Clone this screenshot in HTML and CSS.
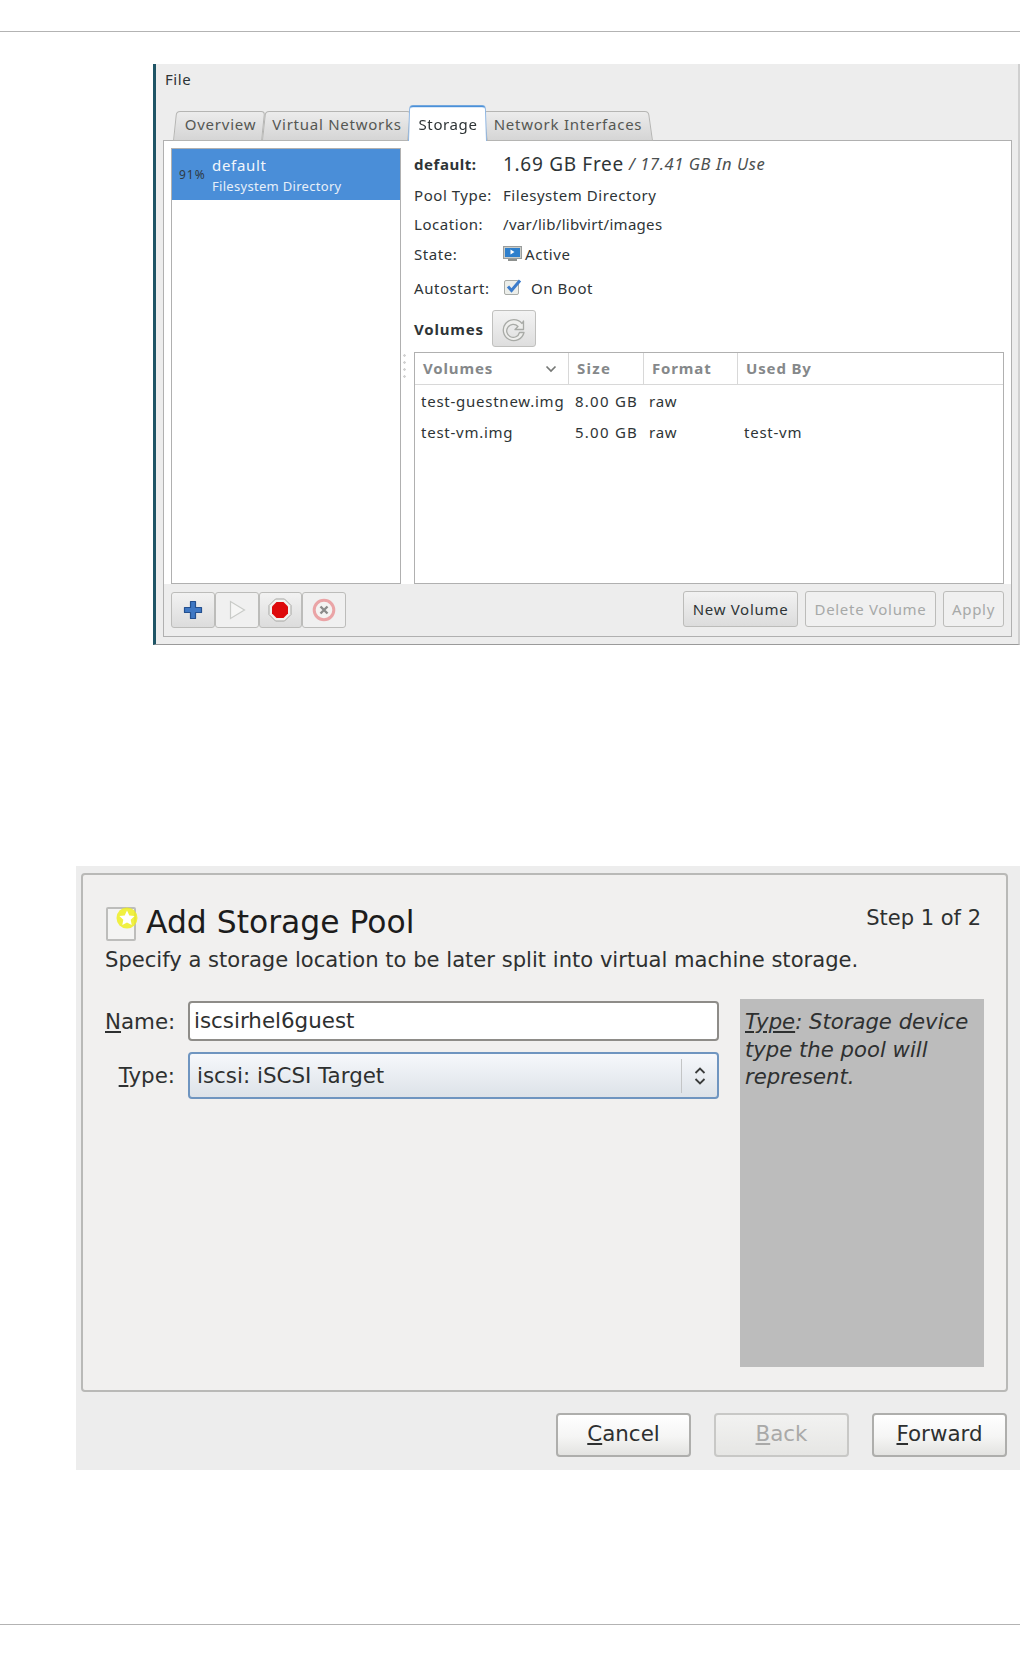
FILE: index.html
```html
<!DOCTYPE html>
<html lang="en">
<head>
    <meta charset="UTF-8">
    <title>Storage Pools</title>
    <link rel="stylesheet" href="styles.css">
</head>
<body>
    <hr class="page-rule page-rule-top">

    <!-- Connection details window -->
    <div class="details-window">
        <div class="menu-bar">File</div>
        <div class="tabs">
            <div class="tab tab-overview">Overview</div>
            <div class="tab tab-networks">Virtual Networks</div>
            <div class="tab tab-storage">Storage</div>
            <div class="tab tab-interfaces">Network Interfaces</div>
        </div>
        <div class="notebook">
            <div class="pool-column">
                <div class="pool-list">
                    <div class="pool-row">
                        <span class="pool-usage">91%</span>
                        <div class="pool-names">
                            <div class="pool-name">default</div>
                            <div class="pool-type">Filesystem Directory</div>
                        </div>
                    </div>
                </div>
                <div class="pool-tools">
                    <div class="tool-btn">
                        <svg width="20" height="20" viewBox="0 0 20 20"><path d="M7.500 1.500h5v6h6v5h-6v6h-5v-6h-6v-5h6z" fill="#3f78c4" stroke="#24508f" stroke-width="1.200" stroke-linejoin="round"/></svg>
                    </div>
                    <div class="tool-btn tool-btn-off">
                        <svg width="20" height="20" viewBox="0 0 20 20"><path d="M3.500 1.500v17l14-8.500z" fill="#f6f6f5" stroke="#c9cbc8" stroke-width="1.200"/></svg>
                    </div>
                    <div class="tool-btn">
                        <svg width="24" height="24" viewBox="0 0 24 24"><path d="M7.500 1h9l6.500 6.500v9l-6.500 6.500h-9l-6.500-6.500v-9z" fill="#f3f3f1" stroke="#a5a5a2"/><path d="M8.500 4h7l4.500 4.500v7l-4.500 4.500h-7l-4.500-4.500v-7z" fill="#dd0a0c"/></svg>
                    </div>
                    <div class="tool-btn tool-btn-off">
                        <svg width="24" height="24" viewBox="0 0 24 24"><circle cx="12" cy="12" r="9.800" fill="#f4f3f2" stroke="#eaa4a6" stroke-width="3"/><path d="M8.500 8.500l7 7m0-7l-7 7" stroke="#8b8b8a" stroke-width="2.400"/></svg>
                    </div>
                </div>
            </div>
            <div class="sash"></div>
            <div class="pool-detail">
                <div class="info-row info-head">
                    <span class="info-label info-label-bold">default:</span>
                    <span class="free-space">1.69 GB Free</span>
                    <em class="in-use">/ 17.41 GB In Use</em>
                </div>
                <div class="info-row"><span class="info-label">Pool Type:</span><span>Filesystem Directory</span></div>
                <div class="info-row"><span class="info-label">Location:</span><span class="location">/var/lib/libvirt/images</span></div>
                <div class="info-row">
                    <span class="info-label">State:</span>
                    <svg class="state-icon" width="19" height="16" viewBox="0 0 19 16"><rect x="0.500" y="0.500" width="18" height="12" fill="#c9ccc9" stroke="#9a9d9c"/><rect x="2" y="2" width="15" height="9" fill="#2e7fcc"/><path d="M7.500 3.500v5l4-2.500z" fill="#fff"/><rect x="5" y="13" width="9" height="2" fill="#8d908e"/></svg>
                    <span>Active</span>
                </div>
                <div class="info-row info-row-autostart">
                    <span class="info-label">Autostart:</span>
                    <svg class="check-icon" width="20" height="17" viewBox="0 0 20 17"><rect x="1.500" y="1.500" width="14" height="14" rx="1.500" fill="#eceeea" stroke="#a9aca8"/><path d="M5 7.500l3.500 4l8.500-10" fill="none" stroke="#3c7ccb" stroke-width="3"/></svg>
                    <span>On Boot</span>
                </div>
                <div class="volumes-head">
                    <span class="volumes-title">Volumes</span>
                    <div class="refresh-btn">
                        <svg width="28" height="28" viewBox="0 0 28 28"><path d="M22 8.500a10.500 10.500 0 1 0 2 9h-4.500a6.500 6.500 0 1 1-1.500-6l-3 3h8.500v-8.500z" fill="#eeeeec" stroke="#a8aaa6" stroke-width="1.300" stroke-linejoin="round"/></svg>
                    </div>
                </div>
                <div class="volume-table">
                    <div class="vol-row vol-header">
                        <div class="vol-col vol-name">Volumes<svg width="12" height="8" viewBox="0 0 12 8"><path d="M1.500 1.500l4.500 4.500l4.500-4.500" fill="none" stroke="#767876" stroke-width="1.700"/></svg></div>
                        <div class="vol-col vol-size">Size</div>
                        <div class="vol-col vol-format">Format</div>
                        <div class="vol-col vol-used">Used By</div>
                    </div>
                    <div class="vol-row">
                        <div class="vol-col vol-name">test-guestnew.img</div>
                        <div class="vol-col vol-size">8.00 GB</div>
                        <div class="vol-col vol-format">raw</div>
                        <div class="vol-col vol-used"></div>
                    </div>
                    <div class="vol-row">
                        <div class="vol-col vol-name">test-vm.img</div>
                        <div class="vol-col vol-size">5.00 GB</div>
                        <div class="vol-col vol-format">raw</div>
                        <div class="vol-col vol-used">test-vm</div>
                    </div>
                </div>
                <div class="volume-actions">
                    <div class="gtk-btn btn-new">New Volume</div>
                    <div class="gtk-btn gtk-btn-off btn-delete">Delete Volume</div>
                    <div class="gtk-btn gtk-btn-off btn-apply">Apply</div>
                </div>
            </div>
        </div>
    </div>

    <!-- Add storage pool dialog -->
    <div class="pool-dialog">
        <div class="dialog-frame">
            <div class="dialog-title-row">
                <div class="title-icon">
                    <svg class="title-star" width="26" height="26" viewBox="0 0 26 26"><circle cx="13" cy="13" r="10.500" fill="#eeee22" opacity="0.850"/><path d="M13 5.500l2.300 4.900l5.300 0.700l-3.900 3.700l1 5.300l-4.700-2.600l-4.700 2.600l1-5.300l-3.900-3.700l5.300-0.700z" fill="#fff"/></svg>
                </div>
                <h2 class="dialog-title">Add Storage Pool</h2>
                <span class="dialog-step">Step 1 of 2</span>
            </div>
            <p class="dialog-desc">Specify a storage location to be later split into virtual machine storage.</p>
            <div class="dialog-body">
                <div class="dialog-form">
                    <div class="form-row form-row-name">
                        <label class="form-label"><u>N</u>ame:</label>
                        <div class="text-entry">iscsirhel6guest</div>
                    </div>
                    <div class="form-row">
                        <label class="form-label"><u>T</u>ype:</label>
                        <div class="combo">
                            <span class="combo-text">iscsi: iSCSI Target</span>
                            <span class="combo-arrows">
                                <svg width="14" height="26" viewBox="0 0 14 26"><path d="M2.500 10l4.500-4.500l4.500 4.500M2.500 16l4.500 4.500l4.500-4.500" fill="none" stroke="#3a3c3c" stroke-width="1.800"/></svg>
                            </span>
                        </div>
                    </div>
                </div>
                <div class="help-box"><u>Type</u>: Storage device type the pool will represent.</div>
            </div>
        </div>
        <div class="dialog-buttons">
            <div class="dlg-btn"><span><u>C</u>ancel</span></div>
            <div class="dlg-btn dlg-btn-off"><span><u>B</u>ack</span></div>
            <div class="dlg-btn"><span><u>F</u>orward</span></div>
        </div>
    </div>

    <hr class="page-rule page-rule-bottom">
</body>
</html>
```

FILE: styles.css
```css
body {
    margin: 0;
    padding: 0;
    background: #fff;
    height: 1656px;
    overflow: hidden;
    font-family: 'Noto Sans', sans-serif;
    color: #2e3436;
}

.page-rule {
    margin: 0;
    border: none;
    height: 1px;
    background: #b3b3b3;
}

.page-rule-top {
    margin-top: 31px;
}

.page-rule-bottom {
    margin-top: 154px;
}

/* Details window */

.details-window {
    margin: 32px 0 0 153px;
    height: 581px;
    box-sizing: border-box;
    background: #ededed;
    border-left: 3px solid #1f5566;
    border-bottom: 1px solid #9a9a9a;
    border-right: 2px solid #d0d0d0;
    padding: 0 6px 7px 7px;
    font-size: 15px;
    letter-spacing: 0.55px;
}

.menu-bar {
    height: 42px;
    padding: 5px 0 0 2px;
    box-sizing: border-box;
    line-height: 20px;
}

.tabs {
    display: flex;
    height: 35px;
    align-items: flex-end;
    padding-left: 10px;
    margin-bottom: -1px;
    position: relative;
    z-index: 1;
}

.tab {
    position: relative;
    height: 30px;
    box-sizing: border-box;
    text-align: center;
    line-height: 27px;
    color: #555753;
    white-space: nowrap;
    letter-spacing: 0.75px;
}

/* tab shape sits behind the label so only the outline leans */
.tab::before {
    content: "";
    position: absolute;
    inset: 0;
    z-index: -1;
    box-sizing: border-box;
    border: 1px solid #b5b5b3;
    border-radius: 4px 4px 0 0;
    background: linear-gradient(#ececec, #d5d5d5);
    transform-origin: bottom;
    transform: skewX(-6deg);
}

.tab-overview { width: 89px; padding-left: 6px; }
.tab-networks { width: 146px; padding-left: 4px; }
.tab-interfaces { width: 166px; padding-right: 4px; }

.tab-interfaces::before {
    transform: skewX(8deg);
}

.tab-storage {
    width: 79px;
    height: 37px;
    line-height: 41px;
    padding-left: 1px;
    color: #2e3436;
    z-index: 2;
    letter-spacing: 0.6px;
}

.tab-storage::before {
    background: #fff;
    border-color: #8fb6e2;
    border-top: 2px solid #4a90d9;
    border-bottom: none;
    transform: perspective(120px) rotateX(6deg);
}

.notebook {
    display: flex;
    height: 497px;
    box-sizing: border-box;
    border: 1px solid #b0b0b0;
    padding: 7px;
    background: linear-gradient(#fff 443px, #ededed 443px);
}

.pool-column {
    width: 230px;
}

.pool-list {
    height: 436px;
    box-sizing: border-box;
    border: 1px solid #b0b0b0;
    background: #fff;
}

.pool-row {
    display: flex;
    align-items: center;
    height: 51px;
    background: #4a8ed8;
}

.pool-usage {
    width: 40px;
    padding-left: 7px;
    box-sizing: border-box;
    font-size: 12px;
    letter-spacing: 1px;
    color: #2f3a44;
}

.pool-names {
    margin-top: 3px;
}

.pool-name {
    color: #f2f6fb;
    line-height: 20px;
    letter-spacing: 0.7px;
}

.pool-type {
    color: #e6eff9;
    font-size: 13px;
    letter-spacing: 0.3px;
    line-height: 23px;
}

.pool-tools {
    display: flex;
    margin-top: 8px;
}

.tool-btn {
    width: 43.750px;
    height: 36px;
    box-sizing: border-box;
    border: 1px solid #bcbcba;
    border-radius: 3px;
    background: linear-gradient(#f2f2f2, #dcdcdc);
    display: flex;
    align-items: center;
    justify-content: center;
}

.tool-btn-off {
    background: #f0f0f0;
}

.sash {
    width: 13px;
    height: 28px;
    margin-top: 204px;
    background: radial-gradient(circle, #d2d2d2 1px, transparent 1.500px) -3px 0 / 13px 7px repeat-y;
}

.pool-detail {
    width: 590px;
}

.info-row {
    display: flex;
    align-items: center;
    height: 29.500px;
}

.info-head {
    height: 31px;
    margin-bottom: 1px;
}

.info-row-autostart {
    height: 34px;
    margin-top: 2px;
}

.info-label {
    width: 89px;
}

.info-label-bold {
    font-weight: 700;
}

.location {
    letter-spacing: 0.3px;
}

.free-space {
    font-size: 19px;
    letter-spacing: 0.7px;
    margin-right: 5px;
}

.in-use {
    font-size: 16.500px;
    letter-spacing: 0.6px;
    color: #4b4f50;
}

.state-icon {
    margin-right: 3px;
}

.check-icon {
    margin-right: 8px;
}

.volumes-head {
    display: flex;
    align-items: center;
    margin-top: 5.500px;
    height: 37px;
}

.volumes-title {
    width: 78px;
    font-weight: 700;
    letter-spacing: 0.8px;
}

.refresh-btn {
    width: 44px;
    height: 37px;
    box-sizing: border-box;
    border: 1px solid #c0c0be;
    border-radius: 3px;
    background: linear-gradient(#f3f3f3, #dedede);
    display: flex;
    align-items: center;
    justify-content: center;
}

.volume-table {
    height: 232px;
    margin-top: 5px;
    box-sizing: border-box;
    border: 1px solid #b0b0b0;
    background: #fff;
}

.vol-row {
    display: flex;
    height: 31px;
    line-height: 31px;
    letter-spacing: 0.75px;
}

.vol-header {
    margin-bottom: 1px;
    border-bottom: 1px solid #d8d8d8;
    font-weight: 700;
    color: #85888a;
    letter-spacing: 0.85px;
}

.vol-col {
    box-sizing: border-box;
    white-space: nowrap;
    padding-left: 6px;
}

.vol-header .vol-col {
    padding-left: 8px;
    border-right: 1px solid #d8d8d8;
}

.vol-header .vol-used {
    border-right: none;
}

.vol-header .vol-name {
    display: flex;
    align-items: center;
    justify-content: space-between;
    padding-right: 11px;
}

.vol-name { width: 154px; }
.vol-size { width: 75px; letter-spacing: 1.250px; }
.vol-format { width: 94px; padding-left: 5px; }
.vol-used { flex: 1; }

.volume-actions {
    display: flex;
    justify-content: flex-end;
    gap: 7px;
    margin-top: 7px;
}

.gtk-btn {
    height: 36px;
    box-sizing: border-box;
    border: 1px solid #bcbcba;
    border-radius: 3px;
    background: linear-gradient(#f2f2f2, #dcdcdc);
    line-height: 34px;
    text-align: center;
    letter-spacing: 0.7px;
}

.gtk-btn-off {
    background: #f0f0f0;
    color: #a7a9a8;
}

.btn-new { width: 115px; }
.btn-delete { width: 131px; }
.btn-apply { width: 61px; }

/* Add storage pool dialog */

.pool-dialog {
    margin: 221px 0 0 76px;
    height: 604px;
    box-sizing: border-box;
    background: #ededed;
    padding: 7px 12px 0 5px;
    font-family: 'DejaVu Sans', sans-serif;
    color: #2e3030;
}

.dialog-frame {
    height: 519px;
    box-sizing: border-box;
    border: 2px solid #b9b9b7;
    border-radius: 4px;
    background: #f1f0ef;
    padding: 30px 21px 0 22px;
}

.dialog-title-row {
    display: flex;
    align-items: flex-end;
    height: 36px;
}

.title-icon {
    width: 30px;
    height: 34px;
    margin-left: 1px;
    box-sizing: border-box;
    border: 2px solid #bdbdbb;
    border-radius: 2px;
    background: #f4f4f3;
    position: relative;
    flex: none;
}

.title-star {
    position: absolute;
    top: -4px;
    left: 6px;
}

.dialog-title {
    margin: 0 0 1px 10px;
    font-size: 31.400px;
    font-weight: 400;
    line-height: 36px;
    color: #1c1c1c;
}

.dialog-step {
    margin-left: auto;
    margin-right: 4px;
    align-self: flex-start;
    font-size: 21px;
    line-height: 26px;
}

.dialog-desc {
    margin: 5px 0 0;
    font-size: 21.100px;
    line-height: 28px;
    white-space: nowrap;
}

.dialog-body {
    display: flex;
    margin-top: 25px;
}

.dialog-form {
    width: 614px;
    padding-top: 2px;
}

.form-row {
    display: flex;
    align-items: center;
}

.form-row-name {
    margin-bottom: 11px;
}

.form-label {
    width: 70px;
    margin-right: 13px;
    text-align: right;
    font-size: 21.400px;
}

.text-entry,
.combo {
    width: 531px;
    box-sizing: border-box;
    border-radius: 4px;
    font-size: 21.400px;
}

.text-entry {
    height: 40px;
    border: 2px solid #8e8c88;
    background: #fff;
    padding: 0 4px;
    line-height: 36px;
}

.combo {
    height: 47px;
    display: flex;
    align-items: center;
    border: 2px solid #6f95c0;
    background: linear-gradient(#f6f8fb, #e9edf2 50%, #dde2e8);
    padding-left: 7px;
}

.combo-text {
    flex: 1;
}

.combo-arrows {
    width: 36px;
    height: 34px;
    box-sizing: border-box;
    border-left: 1px solid #c3c5c6;
    display: flex;
    align-items: center;
    justify-content: center;
}

.help-box {
    width: 244px;
    height: 368px;
    margin-left: 21px;
    box-sizing: border-box;
    background: #bcbcbc;
    padding: 9px 5px;
    font-size: 21.200px;
    line-height: 27.500px;
    font-style: italic;
}

.dialog-buttons {
    display: flex;
    justify-content: flex-end;
    gap: 23px;
    margin: 21px 1px 0 0;
}

.dlg-btn {
    width: 135px;
    height: 44px;
    box-sizing: border-box;
    border: 2px solid #aeaeac;
    border-radius: 4px;
    background: linear-gradient(#fff, #f5f5f4 55%, #e3e3e1);
    text-align: center;
    font-size: 21.400px;
    line-height: 38px;
}

.dlg-btn-off {
    background: linear-gradient(#f2f2f1, #e6e6e4);
    border-color: #c8c8c6;
    color: #a9a9a8;
}
```
